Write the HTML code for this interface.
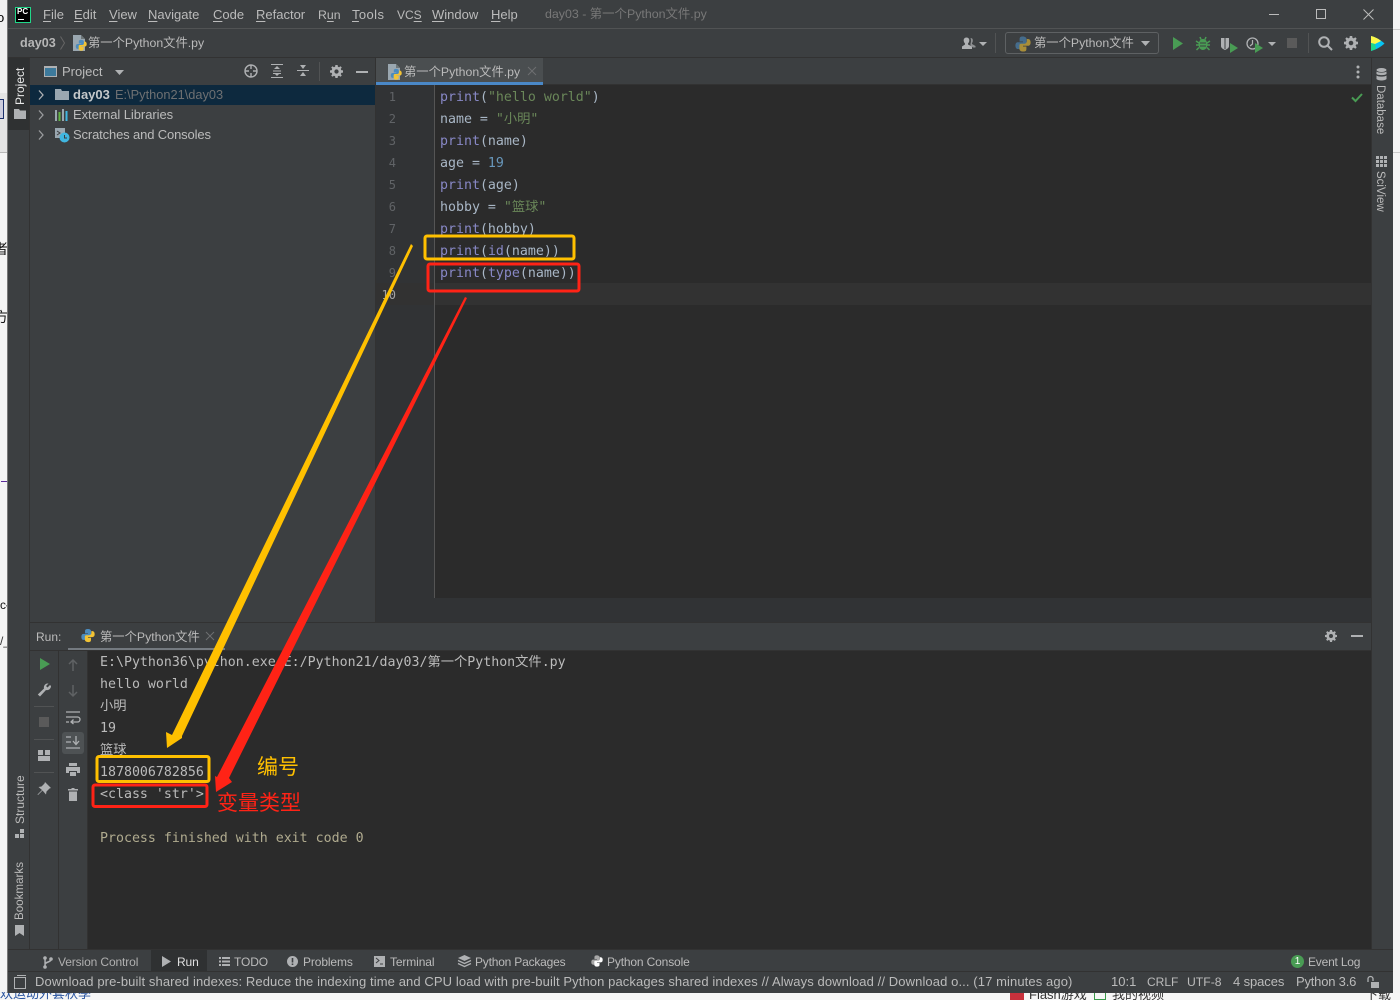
<!DOCTYPE html>
<html><head><meta charset="utf-8">
<style>
html,body{margin:0;padding:0;width:1400px;height:1000px;overflow:hidden;background:#f2f2f2}
*{box-sizing:border-box}
body{position:relative;font-family:"Liberation Sans","Noto Sans CJK SC",sans-serif;font-size:13px;color:#bbb}
.a{position:absolute}
.t{position:absolute;white-space:nowrap;line-height:16px}
.f{font-size:12px;letter-spacing:-.12px}
.m{position:absolute;white-space:nowrap;line-height:22px;font-family:"DejaVu Sans Mono","Noto Sans CJK SC",monospace;font-size:13.28px;letter-spacing:0;margin-top:2px}
.m{color:#a9b7c6}
.k{color:#8888c6}.s{color:#6a8759}.n{color:#6897bb}
.ln{position:absolute;left:376px;width:20px;text-align:right;font-family:"DejaVu Sans Mono",monospace;font-size:12px;color:#606366;line-height:22px;margin-top:1px}
.c{color:#bbb}
u{text-decoration:underline;text-underline-offset:2px;text-decoration-thickness:1px}
.v{position:absolute;writing-mode:vertical-rl;transform:rotate(180deg);white-space:nowrap;line-height:16px;font-size:12px}
.r{position:absolute;writing-mode:vertical-rl;white-space:nowrap;line-height:16px;font-size:11.5px}
svg{position:absolute;overflow:visible}
</style></head><body>

<svg width="0" height="0" style="position:absolute"><defs>
<g id="py"><path d="M7.8 0.5C4.5 0.5 4.6 2 4.6 3.8V5.5H8V6.2H3C1.3 6.2 .4 7.4 .4 9.5S1.3 13 3 13H4.6V10.8C4.6 9.4 5.7 8.3 7.1 8.3H10C11.2 8.3 11.6 7.4 11.6 6.4V3.4C11.6 1.6 10.2 .5 7.8 .5Z" fill="#4b8bbe"/><path d="M8.2 15.5C11.5 15.5 11.4 14 11.4 12.2V10.5H8V9.8H13C14.7 9.8 15.6 8.6 15.6 6.5S14.7 3 13 3H11.8V5.2C11.8 6.6 10.7 7.7 9.3 7.7H6C4.8 7.7 4.4 8.6 4.4 9.6V12.6C4.4 14.4 5.8 15.5 8.2 15.5Z" fill="#f2c335"/></g>
<g id="pf"><path d="M1 0H9L13 4V16H1Z" fill="#9aa7b0"/><path d="M9 0L13 4H9Z" fill="#6e7678"/><use href="#py" transform="translate(3.5,4.5) scale(.72)"/></g>
</defs></svg>

<!-- outside scraps -->
<div class="a" style="left:0;top:0;width:8px;height:93px;background:#f0f0f0"></div>
<div class="a" style="left:0;top:93px;width:8px;height:60px;background:#e4e4e4"></div>
<div class="a" style="left:0;top:152px;width:8px;height:1px;background:#b8b8b8"></div>
<div class="a" style="left:0;top:153px;width:8px;height:840px;background:#f4f4f4"></div>
<div class="a" style="left:0;top:99px;width:4px;height:20px;border:1px solid #1b2f6a;border-left:0;background:#ccd"></div>
<div class="t" style="left:-3px;top:10px;color:#000;font-size:13px;width:11px;overflow:hidden">o</div>
<div class="a" style="left:0;top:240px;width:8px;height:18px;overflow:hidden;color:#111;font-size:14px;line-height:18px"><span style="margin-left:-6px">者</span></div>
<div class="a" style="left:0;top:308px;width:8px;height:18px;overflow:hidden;color:#111;font-size:14px;line-height:18px"><span style="margin-left:-6px">方</span></div>
<div class="a" style="left:1px;top:481px;width:7px;height:1px;background:#5a2a9a"></div>
<div class="a" style="left:0;top:597px;width:8px;height:18px;overflow:hidden;color:#111;font-size:12px;line-height:16px">c{</div>
<div class="a" style="left:0;top:634px;width:8px;height:16px;overflow:hidden;color:#333;font-size:12px">/_</div>
<div class="a" style="left:0;top:993px;width:1400px;height:7px;background:#f6f6f6"></div>
<div class="a" style="left:0;top:992px;width:1400px;height:8px;overflow:hidden">
<span class="t" style="left:0;top:-6px;color:#2a55a0">欢运动外套秋季</span>
<span class="t" style="left:1029px;top:-5px;color:#333">Flash游戏</span>
<span class="t" style="left:1112px;top:-5px;color:#333">我的视频</span>
<span class="t" style="left:1365px;top:-5px;color:#333">下载</span>
<span class="a" style="left:1010px;top:0;width:14px;height:8px;background:#c8313c"></span>
<span class="a" style="left:1094px;top:0;width:12px;height:8px;border:1px solid #3a9a4a"></span>
</div>
<div class="a" style="left:1393px;top:0;width:7px;height:993px;background:#f4f4f4"></div>
<div class="a" style="left:1393px;top:29px;width:7px;height:1px;background:#ccc"></div>
<div class="a" style="left:1393px;top:152px;width:7px;height:1px;background:#ccc"></div>

<!-- window -->
<div class="a" style="left:8px;top:0;width:1385px;height:993px;background:#3c3f41"></div>
<div class="a" style="left:7px;top:0;width:1px;height:993px;background:#777"></div>
<div class="a" style="left:8px;top:28px;width:1385px;height:1px;background:#515354"></div>
<div class="a" style="left:8px;top:57px;width:1385px;height:1px;background:#323232"></div>

<!-- logo -->
<div class="a" style="left:15px;top:7px;width:16px;height:16px;background:#000;border:1px solid #21d789"></div>
<div class="t" style="left:17px;top:6px;font:bold 8px/12px 'Liberation Sans',sans-serif;color:#fff">PC</div>
<div class="a" style="left:18px;top:19px;width:6px;height:1px;background:#fff"></div>

<!-- menu -->
<div class="t" style="left:43px;top:7px"><u>F</u>ile</div>
<div class="t" style="left:74px;top:7px"><u>E</u>dit</div>
<div class="t" style="left:109px;top:7px"><u>V</u>iew</div>
<div class="t" style="left:148px;top:7px"><u>N</u>avigate</div>
<div class="t" style="left:213px;top:7px"><u>C</u>ode</div>
<div class="t" style="left:256px;top:7px"><u>R</u>efactor</div>
<div class="t" style="left:318px;top:7px;font-size:12.3px">R<u>u</u>n</div>
<div class="t" style="left:352px;top:7px;letter-spacing:.4px"><u>T</u>ools</div>
<div class="t" style="left:397px;top:7px;font-size:12px">VC<u>S</u></div>
<div class="t" style="left:432px;top:7px"><u>W</u>indow</div>
<div class="t" style="left:491px;top:7px"><u>H</u>elp</div>
<div class="t" style="left:545px;top:6px;font-size:12.4px;color:#787878">day03 - 第一个Python文件.py</div>

<!-- window controls -->
<div class="a" style="left:1269px;top:14px;width:10px;height:1px;background:#bbb"></div>
<div class="a" style="left:1316px;top:9px;width:10px;height:10px;border:1px solid #bbb"></div>
<svg style="left:1363px;top:9px" width="11" height="11"><path d="M.5 .5L10.5 10.5M10.5 .5L.5 10.5" stroke="#bbb" fill="none"/></svg>

<!-- nav bar -->
<div class="t" style="left:20px;top:35px;font-weight:bold;font-size:12.6px;color:#b6b6b6">day03</div>
<svg style="left:60px;top:36px" width="6" height="14"><path d="M.5 .5L4.5 7L.5 13.5" stroke="#666" fill="none"/></svg>
<svg style="left:72px;top:35px" width="14" height="16"><use href="#pf"/></svg>
<div class="t" style="left:88px;top:35px;font-size:12.3px">第一个Python文件.py</div>

<!-- toolbar right -->
<svg style="left:962px;top:37px" width="14" height="12"><path d="M4.5 0.5C6.5 .5 7.5 2 7.3 3.8 7.2 5 6.5 6 6 6.5V7.5L10 9.5V12H0V9.5L3 7.5V6.5C2.5 6 1.8 5 1.7 3.8 1.500 2 2.500 .5 4.500 .5Z" fill="#afb1b3"/><path d="M8.5 1C10.5 1 11 2.500 10.800 4 10.700 5 10.300 5.700 10 6V7L13.500 9V10.500H11L8.500 8.500V6.500C9 5.500 9.300 3 8.500 1Z" fill="#8e9092"/></svg>
<svg style="left:979px;top:42px" width="8" height="4"><path d="M0 0H8L4 4Z" fill="#afb1b3"/></svg>
<div class="a" style="left:995px;top:33px;width:1px;height:20px;background:#515354"></div>
<div class="a" style="left:1005px;top:32px;width:154px;height:22px;border:1px solid #5e6163;border-radius:3px;background:#3c3f41"></div>
<svg style="left:1015px;top:36px;opacity:.6" width="16" height="16"><use href="#py"/></svg>
<div class="t" style="left:1034px;top:35px;font-size:12.3px">第一个Python文件</div>
<svg style="left:1141px;top:41px" width="9" height="5"><path d="M0 0H9L4.500 5Z" fill="#afb1b3"/></svg>
<svg style="left:1172px;top:37px" width="12" height="13"><path d="M1 0L11 6.500L1 13Z" fill="#499c54"/></svg>
<svg style="left:1196px;top:36px" width="14" height="15" fill="none"><ellipse cx="7" cy="8.500" rx="4.500" ry="5.500" fill="#499c54"/><path d="M0 5L3 7M14 5L11 7M0 9H3M14 9H11M.5 14L3 11.500M13.500 14L11 11.500M4 1L5 3.500M10 1L9 3.500" stroke="#499c54" stroke-width="1.500"/><path d="M4 7H10M4 10H10" stroke="#3c3f41"/></svg>
<svg style="left:1221px;top:37px" width="18" height="15"><path d="M0 1H8V9C8 11 6 12 4 13 2 12 0 11 0 9Z" fill="#afb1b3"/><path d="M3 1H5V12H3Z" fill="#3c3f41" opacity=".5"/><path d="M9 6L17 11L9 16Z" fill="#499c54"/></svg>
<svg style="left:1246px;top:37px" width="18" height="15" fill="none"><circle cx="6.500" cy="6.500" r="5.500" stroke="#afb1b3" stroke-width="1.300"/><path d="M6.500 3V7L4 9" stroke="#afb1b3" stroke-width="1.200"/><path d="M9 6L17 11L9 16Z" fill="#499c54"/></svg>
<svg style="left:1268px;top:42px" width="8" height="4"><path d="M0 0H8L4 4Z" fill="#afb1b3"/></svg>
<div class="a" style="left:1287px;top:38px;width:10px;height:10px;background:#5a5a5a"></div>
<div class="a" style="left:1308px;top:33px;width:1px;height:20px;background:#515354"></div>
<svg style="left:1318px;top:36px" width="15" height="15" fill="none" stroke="#afb1b3" stroke-width="2"><circle cx="6" cy="6" r="4.800"/><path d="M9.500 9.500L14 14"/></svg>
<svg style="left:1344px;top:36px" width="14" height="14"><path d="M5.800 0H8.200L8.500 1.900 9.800 2.400 11.300 1.300 12.700 2.700 11.600 4.200 12.100 5.500 14 5.800V8.200L12.100 8.500 11.600 9.800 12.700 11.300 11.300 12.700 9.800 11.600 8.500 12.100 8.200 14H5.800L5.500 12.100 4.200 11.600 2.700 12.700 1.300 11.300 2.400 9.800 1.900 8.500 0 8.200V5.800L1.900 5.500 2.400 4.200 1.300 2.700 2.700 1.300 4.200 2.400 5.500 1.900ZM7 4.700A2.300 2.300 0 1 0 7 9.300 2.300 2.300 0 1 0 7 4.700Z" fill="#afb1b3" fill-rule="evenodd"/></svg>
<svg style="left:1370px;top:36px" width="15" height="15"><path d="M1 0C5 1 11 4 14.500 7.500 11 11 5 14 1 15Z" fill="#07c3f2"/><path d="M1 0C5 1 9 3 11 5L5 8 1 7Z" fill="#fcf84a"/><path d="M1 7L5 8 6 13 1 15Z" fill="#21d789"/></svg>

<!-- left strip -->
<div class="a" style="left:8px;top:58px;width:22px;height:72px;background:#2f3132"></div>
<div class="a" style="left:29px;top:58px;width:1px;height:891px;background:#323232"></div>
<div class="v" style="left:12px;top:67px;color:#e8e8e8;height:38px">Project</div>
<svg style="left:14px;top:109px" width="12" height="10"><path d="M0 0H5L6 1.500H12V10H0Z" fill="#afb1b3"/></svg>
<div class="v" style="left:12px;top:776px;height:48px">Structure</div>
<svg style="left:15px;top:829px" width="10" height="10"><path d="M5 0H9V4H5ZM0 5H4V9H0ZM5 5H9V9H5Z" fill="#afb1b3"/></svg>
<div class="v" style="left:12px;top:862px;height:58px;font-size:11.6px">Bookmarks</div>
<svg style="left:15px;top:925px" width="10" height="12"><path d="M0 0H9V11L4.500 8L0 11Z" fill="#afb1b3"/></svg>

<!-- project panel -->
<div class="a" style="left:44px;top:66px;width:13px;height:11px;border:1px solid #afb1b3;background:#3d7a9c;border-top-width:2px"></div>
<div class="t" style="left:62px;top:64px">Project</div>
<svg style="left:115px;top:70px" width="9" height="5"><path d="M0 0H9L4.500 5Z" fill="#afb1b3"/></svg>
<svg style="left:244px;top:64px" width="14" height="14" fill="none" stroke="#afb1b3" stroke-width="1.400"><circle cx="7" cy="7" r="6"/><path d="M7 1V5M7 9V13M1 7H5M9 7H13"/></svg>
<svg style="left:271px;top:64px" width="13" height="14"><path d="M0 .5H12M0 13.500H12M2 9.500H10" stroke="#afb1b3" fill="none"/><path d="M6 2L9 5H3ZM6 12L3 9H9Z" fill="#afb1b3"/><path d="M2 7H10" stroke="#afb1b3"/></svg>
<svg style="left:297px;top:64px" width="13" height="14"><path d="M0 6.500H12" stroke="#afb1b3" fill="none"/><path d="M6 5L3 1H9ZM6 8L9 12H3Z" fill="#afb1b3"/></svg>
<div class="a" style="left:319px;top:62px;width:1px;height:19px;background:#515354"></div>
<svg style="left:330px;top:65px" width="13" height="13" viewBox="0 0 14 14"><path d="M5.800 0H8.200L8.500 1.900 9.800 2.400 11.300 1.300 12.700 2.700 11.600 4.200 12.100 5.500 14 5.800V8.200L12.100 8.500 11.600 9.800 12.700 11.300 11.300 12.700 9.800 11.600 8.500 12.100 8.200 14H5.800L5.500 12.100 4.200 11.600 2.700 12.700 1.300 11.300 2.400 9.800 1.900 8.500 0 8.200V5.800L1.900 5.500 2.400 4.200 1.300 2.700 2.700 1.300 4.200 2.400 5.500 1.900ZM7 4.700A2.300 2.300 0 1 0 7 9.300 2.300 2.300 0 1 0 7 4.700Z" fill="#afb1b3" fill-rule="evenodd"/></svg>
<div class="a" style="left:356px;top:71px;width:12px;height:2px;background:#afb1b3"></div>

<div class="a" style="left:30px;top:85px;width:345px;height:20px;background:#0d293e"></div>
<svg style="left:38px;top:90px" width="6" height="10" fill="none" stroke="#afb1b3" stroke-width="1.300"><path d="M1 .5L5 5L1 9.500"/></svg>
<svg style="left:38px;top:110px" width="6" height="10" fill="none" stroke="#9a9c9e" stroke-width="1.300"><path d="M1 .5L5 5L1 9.500"/></svg>
<svg style="left:38px;top:130px" width="6" height="10" fill="none" stroke="#9a9c9e" stroke-width="1.300"><path d="M1 .5L5 5L1 9.500"/></svg>
<svg style="left:55px;top:89px" width="14" height="11"><path d="M0 0H6L7 2H14V11H0Z" fill="#9aa7b0"/></svg>
<div class="t" style="left:73px;top:87px;font-weight:bold;color:#c4c8ca">day03</div>
<div class="t" style="left:115px;top:87px;font-size:12.8px;color:#6e7072">E:\Python21\day03</div>
<svg style="left:55px;top:109px" width="14" height="12"><path d="M0 1H2V12H0Z" fill="#9aa7b0"/><path d="M3.500 3H5.500V12H3.500Z" fill="#62b543"/><path d="M7 0H9V12H7Z" fill="#9aa7b0"/><path d="M10.500 2H12.500V12H10.500Z" fill="#40b6e0"/></svg>
<div class="t" style="left:73px;top:107px;letter-spacing:-.06px">External Libraries</div>
<svg style="left:55px;top:128px" width="15" height="15"><path d="M0 0H10V10H0Z" fill="#9aa7b0"/><path d="M2 3L5 5L2 7" stroke="#3c3f41" fill="none"/><circle cx="9.500" cy="9.500" r="5" fill="#40b6e0"/><path d="M9.500 7V10H12" stroke="#3c3f41" fill="none"/></svg>
<div class="t" style="left:73px;top:127px;letter-spacing:-.14px">Scratches and Consoles</div>

<div class="a" style="left:375px;top:58px;width:1px;height:564px;background:#323232"></div>

<!-- editor tabs -->
<div class="a" style="left:376px;top:58px;width:167px;height:24px;background:#4a4e50"></div>
<div class="a" style="left:376px;top:84px;width:995px;height:1px;background:#323232"></div>
<div class="a" style="left:376px;top:82px;width:167px;height:3px;background:#4a88c7"></div>
<svg style="left:387px;top:64px" width="14" height="16"><use href="#pf"/></svg>
<div class="t" style="left:404px;top:64px;font-size:12.3px">第一个Python文件.py</div>
<svg style="left:528px;top:67px" width="8" height="8"><path d="M0 0L8 8M8 0L0 8" stroke="#6d6f71" fill="none"/></svg>
<svg style="left:1356px;top:65px" width="4" height="14"><circle cx="2" cy="2" r="1.500" fill="#afb1b3"/><circle cx="2" cy="7" r="1.500" fill="#afb1b3"/><circle cx="2" cy="12" r="1.500" fill="#afb1b3"/></svg>

<!-- editor -->
<div class="a" style="left:376px;top:85px;width:995px;height:513px;background:#2b2b2b"></div>
<div class="a" style="left:376px;top:85px;width:58px;height:513px;background:#313335"></div>
<div class="a" style="left:376px;top:283px;width:995px;height:22px;background:#323232"></div>
<div class="a" style="left:434px;top:85px;width:1px;height:513px;background:#555"></div>
<div class="a" style="left:376px;top:598px;width:995px;height:24px;background:#313335"></div>
<div class="ln" style="top:85px">1</div><div class="ln" style="top:107px">2</div><div class="ln" style="top:129px">3</div><div class="ln" style="top:151px">4</div><div class="ln" style="top:173px">5</div><div class="ln" style="top:195px">6</div><div class="ln" style="top:217px">7</div><div class="ln" style="top:239px">8</div><div class="ln" style="top:261px">9</div><div class="ln" style="top:283px;color:#a4a3a3">10</div>
<div class="m" style="left:440px;top:85px"><span class="k">print</span>(<span class="s">"hello world"</span>)</div>
<div class="m" style="left:440px;top:107px">name = <span class="s">"小明"</span></div>
<div class="m" style="left:440px;top:129px"><span class="k">print</span>(name)</div>
<div class="m" style="left:440px;top:151px">age = <span class="n">19</span></div>
<div class="m" style="left:440px;top:173px"><span class="k">print</span>(age)</div>
<div class="m" style="left:440px;top:195px">hobby = <span class="s">"篮球"</span></div>
<div class="m" style="left:440px;top:217px"><span class="k">print</span>(hobby)</div>
<div class="m" style="left:440px;top:239px"><span class="k">print</span>(<span class="k">id</span>(name))</div>
<div class="m" style="left:440px;top:261px"><span class="k">print</span>(<span class="k">type</span>(name))</div>
<svg style="left:1351px;top:93px" width="12" height="9"><path d="M1 4.500L4.500 8L11 1" stroke="#499c54" stroke-width="2" fill="none"/></svg>

<!-- right strip -->
<div class="a" style="left:1371px;top:58px;width:1px;height:891px;background:#323232"></div>
<svg style="left:1376px;top:68px" width="11" height="13"><ellipse cx="5.500" cy="2" rx="5" ry="2" fill="#afb1b3"/><path d="M.5 3.500C2 5 9 5 10.500 3.500V6C9 7.500 2 7.500 .5 6ZM.5 7.500C2 9 9 9 10.500 7.500V11C9 13 2 13 .5 11Z" fill="#afb1b3"/></svg>
<div class="r" style="left:1372px;top:85px">Database</div>
<svg style="left:1376px;top:156px" width="11" height="11"><path d="M0 0H3V3H0ZM4 0H7V3H4ZM8 0H11V3H8ZM0 4H3V7H0ZM4 4H7V7H4ZM8 4H11V7H8ZM0 8H3V11H0ZM4 8H7V11H4ZM8 8H11V11H8Z" fill="#afb1b3"/></svg>
<div class="r" style="left:1372px;top:171px">SciView</div>

<!-- run panel -->
<div class="a" style="left:30px;top:622px;width:1341px;height:1px;background:#323232"></div>
<div class="t" style="left:36px;top:629px;font-size:12px">Run:</div>
<svg style="left:81px;top:628px" width="14" height="15" viewBox="0 0 16 16"><use href="#py"/></svg>
<div class="t" style="left:100px;top:629px;font-size:12.3px">第一个Python文件</div>
<svg style="left:206px;top:632px" width="8" height="8"><path d="M0 0L8 8M8 0L0 8" stroke="#6d6f71" fill="none"/></svg>
<div class="a" style="left:68px;top:648px;width:157px;height:2px;background:#747a80"></div>
<svg style="left:1325px;top:630px" width="12" height="12" viewBox="0 0 14 14"><path d="M5.800 0H8.200L8.500 1.900 9.800 2.400 11.300 1.300 12.700 2.700 11.600 4.200 12.100 5.500 14 5.800V8.200L12.100 8.500 11.600 9.800 12.700 11.300 11.300 12.700 9.800 11.600 8.500 12.100 8.200 14H5.800L5.500 12.100 4.200 11.600 2.700 12.700 1.300 11.300 2.400 9.800 1.900 8.500 0 8.200V5.800L1.900 5.500 2.400 4.200 1.300 2.700 2.700 1.300 4.200 2.400 5.500 1.900ZM7 4.700A2.300 2.300 0 1 0 7 9.300 2.300 2.300 0 1 0 7 4.700Z" fill="#afb1b3" fill-rule="evenodd"/></svg>
<div class="a" style="left:1351px;top:635px;width:12px;height:2px;background:#afb1b3"></div>
<div class="a" style="left:30px;top:650px;width:1341px;height:1px;background:#323232"></div>
<div class="a" style="left:88px;top:651px;width:1283px;height:298px;background:#2b2b2b"></div>
<div class="a" style="left:58px;top:651px;width:1px;height:298px;background:#323232"></div>
<div class="a" style="left:87px;top:651px;width:1px;height:298px;background:#323232"></div>

<svg style="left:40px;top:658px" width="10" height="12"><path d="M0 0L10 6L0 12Z" fill="#499c54"/></svg>
<svg style="left:37px;top:683px" width="15" height="14"><path d="M14 3A4 4 0 0 1 9 7L3 13.500 .8 11.500 7 5.500A4 4 0 0 1 11.500 .5L9 3 10.500 4.500 13 2Z" fill="#afb1b3"/></svg>
<div class="a" style="left:34px;top:706px;width:20px;height:1px;background:#515354"></div>
<div class="a" style="left:39px;top:717px;width:10px;height:10px;background:#5a5a5a"></div>
<div class="a" style="left:34px;top:739px;width:20px;height:1px;background:#515354"></div>
<svg style="left:38px;top:750px" width="12" height="11"><path d="M0 0H5V5H0ZM7 0H12V5H7ZM0 6H12V11H0Z" fill="#afb1b3"/></svg>
<div class="a" style="left:34px;top:772px;width:20px;height:1px;background:#515354"></div>
<svg style="left:37px;top:782px" width="14" height="14"><path d="M8 0L14 6 12.500 6.500 9.500 9.500 9 12.500 5.500 8.500 1 13 .5 12.500 5 8 1.500 5 4.500 4.500 7.500 1.500Z" fill="#afb1b3"/></svg>

<svg style="left:68px;top:659px" width="10" height="12" fill="none"><path d="M5 12V1M1 5L5 1L9 5" stroke="#5f6264" stroke-width="1.500"/></svg>
<svg style="left:68px;top:685px" width="10" height="12" fill="none"><path d="M5 0V11M1 7L5 11L9 7" stroke="#5f6264" stroke-width="1.500"/></svg>
<svg style="left:66px;top:711px" width="14" height="13" fill="none" stroke="#afb1b3" stroke-width="1.300"><path d="M0 1H14M0 6H11.500A2.500 2.500 0 0 1 11.500 11H6M0 11H3M7.500 8.500L5 11L7.500 13"/></svg>
<div class="a" style="left:62px;top:732px;width:22px;height:22px;background:#4e5254;border-radius:3px"></div>
<svg style="left:66px;top:736px" width="14" height="13" fill="none" stroke="#afb1b3" stroke-width="1.300"><path d="M0 1H5M0 6H5M0 12H14M10 0V8M7 5L10 8.500L13 5"/></svg>
<svg style="left:66px;top:763px" width="14" height="13"><path d="M3 0H11V3H3ZM0 4H14V10H11V8H3V10H0ZM4 9H10V13H4Z" fill="#afb1b3"/></svg>
<svg style="left:68px;top:788px" width="10" height="13"><path d="M3.500 0H6.500V1H10V2.500H0V1H3.500ZM1 3.500H9V13H1Z" fill="#afb1b3"/></svg>

<!-- console -->
<div class="m c" style="left:100px;top:650px">E:\Python36\python.exe E:/Python21/day03/第一个Python文件.py</div>
<div class="m c" style="left:100px;top:672px">hello world</div>
<div class="m c" style="left:100px;top:694px">小明</div>
<div class="m c" style="left:100px;top:716px">19</div>
<div class="m c" style="left:100px;top:738px">篮球</div>
<div class="m c" style="left:100px;top:760px">1878006782856</div>
<div class="m c" style="left:100px;top:782px">&lt;class 'str'&gt;</div>
<div class="m" style="left:100px;top:826px;color:#b0ab8f">Process finished with exit code 0</div>

<!-- bottom tool bar -->
<div class="a" style="left:8px;top:949px;width:1385px;height:1px;background:#323232"></div>
<div class="a" style="left:151px;top:950px;width:56px;height:21px;background:#2f3132"></div>
<div class="a" style="left:8px;top:971px;width:1385px;height:1px;background:#323232"></div>
<svg style="left:43px;top:956px" width="10" height="13" fill="#afb1b3"><circle cx="2" cy="2" r="1.800"/><circle cx="2" cy="11" r="1.800"/><circle cx="8" cy="3" r="1.800"/><path d="M1.300 2H2.800V11H1.300ZM7.300 3H8.800C8.800 7 4 6 2.500 9L2 7C3 5 7 5.500 7.300 3Z"/></svg>
<div class="t f" style="left:58px;top:954px;color:#b0b0b0">Version Control</div>
<svg style="left:162px;top:956px" width="9" height="11"><path d="M0 0L9 5.500L0 11Z" fill="#afb1b3"/></svg>
<div class="t f" style="left:177px;top:954px;color:#e0e0e0">Run</div>
<svg style="left:219px;top:957px" width="11" height="9"><path d="M0 0H2V2H0ZM3 0H11V2H3ZM0 3.500H2V5.500H0ZM3 3.500H11V5.500H3ZM0 7H2V9H0ZM3 7H11V9H3Z" fill="#afb1b3"/></svg>
<div class="t f" style="left:234px;top:954px">TODO</div>
<svg style="left:287px;top:956px" width="11" height="11"><circle cx="5.500" cy="5.500" r="5.500" fill="#afb1b3"/><path d="M4.700 2H6.300V6.500H4.700ZM4.700 7.500H6.300V9H4.700Z" fill="#3c3f41"/></svg>
<div class="t f" style="left:303px;top:954px">Problems</div>
<svg style="left:374px;top:956px" width="11" height="11"><path d="M0 0H11V11H0Z" fill="#afb1b3"/><path d="M2 2L5 4.500L2 7M6 8H9" stroke="#3c3f41" fill="none"/></svg>
<div class="t f" style="left:390px;top:954px">Terminal</div>
<svg style="left:458px;top:955px" width="13" height="13"><path d="M6.500 0L13 3L6.500 6L0 3Z" fill="#afb1b3"/><path d="M0 5.500L6.500 8.500L13 5.500M0 8.500L6.500 11.500L13 8.500" stroke="#afb1b3" stroke-width="1.300" fill="none"/></svg>
<div class="t f" style="left:475px;top:954px;letter-spacing:-.2px">Python Packages</div>
<svg style="left:591px;top:955px;filter:grayscale(1) brightness(1.300)" width="12" height="12" viewBox="0 0 16 16"><use href="#py"/></svg>
<div class="t f" style="left:607px;top:954px;letter-spacing:-.15px">Python Console</div>
<div class="a" style="left:1291px;top:955px;width:13px;height:13px;border-radius:50%;background:#499c54;color:#fff;font-size:10px;line-height:13px;text-align:center">1</div>
<div class="t f" style="left:1308px;top:954px;letter-spacing:-.2px">Event Log</div>

<!-- status bar -->
<div class="a" style="left:14px;top:977px;width:12px;height:12px;border:1px solid #afb1b3;border-top-width:1px;background:#3c3f41"></div>
<div class="a" style="left:17px;top:975px;width:9px;height:1px;background:#afb1b3"></div>
<div class="t" style="left:35px;top:974px;font-size:13px;letter-spacing:.1px;width:1045px">Download pre-built shared indexes: Reduce the indexing time and CPU load with pre-built Python packages shared indexes // Always download // Download o... (17 minutes ago)</div>
<div class="t" style="left:1111px;top:974px">10:1</div>
<div class="t" style="left:1147px;top:974px;font-size:12px">CRLF</div>
<div class="t" style="left:1187px;top:974px;font-size:12.2px">UTF-8</div>
<div class="t" style="left:1233px;top:974px;letter-spacing:-.1px">4 spaces</div>
<div class="t" style="left:1296px;top:974px;letter-spacing:-.2px">Python 3.6</div>
<svg style="left:1367px;top:976px" width="12" height="12"><path d="M1 6V3A2.500 2.500 0 0 1 6 3V5" stroke="#afb1b3" stroke-width="1.300" fill="none"/><path d="M4 6H12V12H4Z" fill="#afb1b3"/></svg>

<!-- annotations -->
<svg style="left:0;top:0" width="1400" height="1000">
<polygon points="411,244 413,246 182,736 182,738 167,748 166,732 172,735" fill="#ffc000"/>
<polygon points="465,297 467,298 229,778 232,782 216,792 215,776 217,777" fill="#ff2316"/>
<rect x="425" y="236" width="149" height="23" rx="2" fill="none" stroke="#ffc000" stroke-width="3"/>
<rect x="428" y="264" width="151" height="27" rx="2" fill="none" stroke="#ff2316" stroke-width="3"/>
<rect x="97" y="756.500" width="112" height="25" rx="2" fill="none" stroke="#ffc000" stroke-width="3"/>
<rect x="93" y="785" width="114" height="21.500" rx="2" fill="none" stroke="#ff2316" stroke-width="3"/>
</svg>
<div class="t" style="left:257px;top:755px;font-size:21px;line-height:26px;color:#ffc000">编号</div>
<div class="t" style="left:217px;top:791px;font-size:21px;line-height:26px;color:#ff2316">变量类型</div>
</body></html>
